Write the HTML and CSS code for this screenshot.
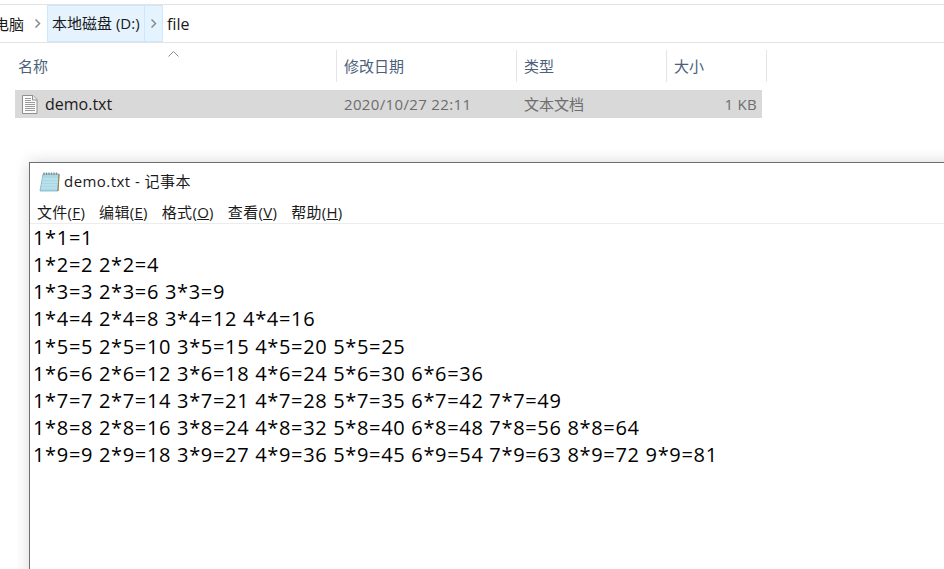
FILE: index.html
```html
<!DOCTYPE html>
<html lang="en">
<head>
    <meta charset="UTF-8">
    <title>demo.txt - 记事本</title>
    <link rel="stylesheet" href="styles.css">
</head>
<body>
    <div class="address-bar">
        <span class="crumb crumb-cut">电脑</span>
        <svg class="chevron" width="7" height="9" viewBox="0 0 7 9"><path d="M1.5 .5 5.5 4.5 1.5 8.5" fill="none" stroke="#8a8a8a" stroke-width="1.5"/></svg>
        <span class="crumb crumb-hot">本地磁盘 (D:)</span>
        <span class="crumb-arrow"><svg class="chevron-hot" width="7" height="9" viewBox="0 0 7 9"><path d="M1.5 .5 5.5 4.5 1.5 8.5" fill="none" stroke="#8a8a8a" stroke-width="1.5"/></svg></span>
        <span class="crumb crumb-file">file</span>
    </div>

    <div class="file-list">
        <div class="file-head">
            <div class="col col-name">名称
                <svg class="sort-arrow" width="11" height="6" viewBox="0 0 11 6"><path d="M.5 5.5 5.500 .5 10.5 5.5" fill="none" stroke="#8c8c8c"/></svg>
            </div>
            <div class="col col-date">修改日期</div>
            <div class="col col-type">类型</div>
            <div class="col col-size">大小</div>
        </div>
        <div class="file-row">
            <div class="cell cell-name">
                <svg width="16" height="19" viewBox="0 0 16 19">
                    <path d="M.5.500h10.500l4 4v14H.5z" fill="#fbfbfb" stroke="#8f8f8f"/>
                    <path d="M10.500.5v4.500h4.500" fill="#eeeeee" stroke="#8f8f8f"/>
                    <path d="M3 3.500h6M3 5.500h6M3 7.500h10M3 9.500h10M3 11.500h10M3 13.500h10M3 15.500h10" stroke="#9a9a9a"/>
                </svg>
                <span>demo.txt</span>
            </div>
            <div class="cell cell-date">2020/10/27 22:11</div>
            <div class="cell cell-type">文本文档</div>
            <div class="cell cell-size">1 KB</div>
        </div>
    </div>

    <div class="notepad">
        <div class="title-bar">
            <svg width="21" height="21" viewBox="0 0 21 21">
                <path d="M4 3h16l-1 17H1z" fill="#a8d8e6" stroke="#7fb0c0" stroke-width="0.8"/>
                <path d="M3.500 8h15.500M3 11h16M2.500 14h16M2 17h16" stroke="#c8e8f0"/>
                <path d="M5 1.500v2.500M7.500 1.500v2.500M10 1.500v2.500M12.500 1.500v2.500M15 1.500v2.500M17.500 1.500v2.500" stroke="#84909a" stroke-width="1.4"/>
                <path d="M20 3l-1 17" stroke="#a08450" stroke-width="1.2"/>
            </svg>
            <span class="title-text">demo.txt - 记事本</span>
        </div>
        <div class="menu-bar">
            <span>文件(<u>F</u>)</span>
            <span>编辑(<u>E</u>)</span>
            <span>格式(<u>O</u>)</span>
            <span>查看(<u>V</u>)</span>
            <span>帮助(<u>H</u>)</span>
        </div>
        <div class="text-area">
            <div>1*1=1</div>
            <div>1*2=2 2*2=4</div>
            <div>1*3=3 2*3=6 3*3=9</div>
            <div>1*4=4 2*4=8 3*4=12 4*4=16</div>
            <div>1*5=5 2*5=10 3*5=15 4*5=20 5*5=25</div>
            <div>1*6=6 2*6=12 3*6=18 4*6=24 5*6=30 6*6=36</div>
            <div>1*7=7 2*7=14 3*7=21 4*7=28 5*7=35 6*7=42 7*7=49</div>
            <div>1*8=8 2*8=16 3*8=24 4*8=32 5*8=40 6*8=48 7*8=56 8*8=64</div>
            <div>1*9=9 2*9=18 3*9=27 4*9=36 5*9=45 6*9=54 7*9=63 8*9=72 9*9=81</div>
        </div>
    </div>
</body>
</html>
```

FILE: styles.css
```css
html, body {
    height: 100%;
}

body {
    margin: 0;
    overflow: hidden;
    background-color: white;
    color: #1a1a1a;
    font-family: "Open Sans", "Noto Sans CJK SC", sans-serif;
    font-size: 15px;
}

.address-bar {
    display: flex;
    align-items: center;
    height: 37px;
    margin-top: 4px;
    border-top: 1px solid #e3e3e3;
    border-bottom: 1px solid #e3e3e3;
    overflow: hidden;
}

.crumb-cut {
    margin-left: -6px;
}

.chevron {
    margin: 0 6px 0 10px;
}

.crumb-hot {
    box-sizing: border-box;
    height: 37px;
    width: 98px;
    line-height: 35px;
    padding-left: 4px;
    background-color: #e5f3ff;
    border: 1px solid #cce8ff;
    white-space: nowrap;
}

.crumb-arrow {
    box-sizing: border-box;
    display: flex;
    align-items: center;
    justify-content: center;
    width: 19px;
    height: 37px;
    margin-left: -1px;
    background-color: #e5f3ff;
    border: 1px solid #cce8ff;
}

.crumb-file {
    margin-left: 4px;
    font-size: 16px;
}

.file-list {
    padding-top: 7px;
}

.file-head {
    display: flex;
    height: 32px;
    color: #4c607a;
}

.col {
    box-sizing: border-box;
    line-height: 32px;
    padding-left: 7px;
    border-right: 1px solid #e5e5e5;
}

.col-name {
    position: relative;
    width: 337px;
    padding-left: 18px;
}

.sort-arrow {
    position: absolute;
    top: 1px;
    left: 168px;
}

.col-date {
    width: 180px;
}

.col-type {
    width: 150px;
}

.col-size {
    width: 100px;
}

.file-row {
    display: flex;
    align-items: center;
    width: 747px;
    height: 28px;
    margin: 8px 0 0 15px;
    background-color: #d9d9d9;
    color: #6d6d6d;
}

.cell {
    box-sizing: border-box;
    white-space: nowrap;
}

.cell-name {
    display: flex;
    align-items: center;
    gap: 7px;
    width: 322px;
    padding-left: 7px;
    color: #1a1a1a;
    font-size: 16px;
}

.cell-date {
    width: 180px;
    padding-left: 7px;
    letter-spacing: 0.35px;
}

.cell-type {
    width: 150px;
    padding: 0 0 2px 7px;
}

.cell-size {
    width: 95px;
    padding-right: 5px;
    text-align: right;
    letter-spacing: 0.3px;
}

.notepad {
    box-sizing: border-box;
    height: 420px;
    margin: 44px -20px 0 29px;
    background-color: white;
    border: 1px solid #6e6e6e;
    box-shadow: 0 0 14px rgba(0, 0, 0, 0.16);
}

.title-bar {
    display: flex;
    align-items: center;
    gap: 4px;
    height: 36px;
    padding-left: 9px;
}

.title-text {
    margin-bottom: 2px;
    letter-spacing: 0.45px;
}

.menu-bar {
    box-sizing: border-box;
    display: flex;
    gap: 14px;
    height: 25px;
    padding-left: 7px;
    line-height: 26px;
    letter-spacing: 0.3px;
    border-bottom: 1px solid #ededed;
}

.text-area {
    padding-left: 3px;
    color: black;
    font-size: 20px;
    letter-spacing: 0.67px;
    line-height: 27.12px;
    white-space: nowrap;
}
```
